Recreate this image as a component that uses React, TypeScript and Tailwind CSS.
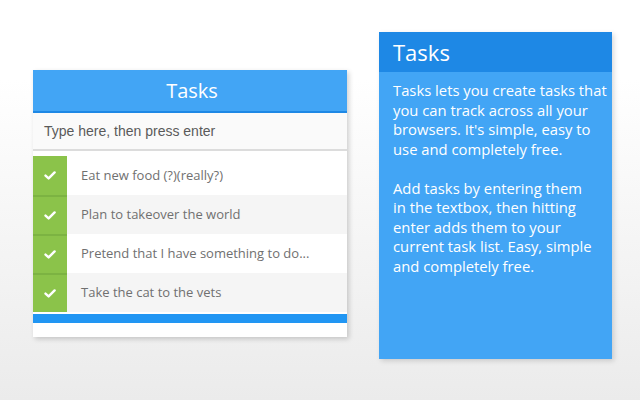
import React from 'react';

const tasks = [
  'Eat new food (?)(really?)',
  'Plan to takeover the world',
  'Pretend that I have something to do...',
  'Take the cat to the vets',
];

const intro = ['Tasks lets you create tasks that', 'you can track across all your', "browsers. It's simple, easy to", 'use and completely free.'];
const howTo = ['Add tasks by entering them', 'in the textbox, then hitting', 'enter adds them to your', 'current task list. Easy, simple', 'and completely free.'];

const Check = () => (
  <svg width="12" height="9" viewBox="0 0 12 9" className="block">
    <path d="M1.5 4.6 L4.6 7.4 L10.6 1.4" fill="none" stroke="white" strokeWidth="2.4" strokeLinecap="round" strokeLinejoin="round" />
  </svg>
);

const TaskCard = () => (
  <div className="mt-[70px] w-[314px] bg-white shadow-[2px_2px_5px_rgba(0,0,0,0.18)]">
    <div className="h-[43px] bg-[#42a5f5] border-b-2 border-[#1e88e5] flex items-center justify-center">
      <span className="text-[20px] text-white font-['Open_Sans',sans-serif] leading-none pl-[4px]">Tasks</span>
    </div>
    <div className="h-[38px] bg-[#fafafa] border-b-2 border-[#dcdcdc] flex items-center pl-[11px]">
      <span className="text-[14px] text-[#5a5a5a] font-['Liberation_Sans',Arial,sans-serif]">Type here, then press enter</span>
    </div>
    <div className="pt-[5px]">
      {tasks.map((t, i) => (
        <div key={i} className={`flex h-[39px] ${i % 2 === 1 ? 'bg-[#f5f5f5]' : 'bg-white'}`}>
          <div className={`w-[34px] bg-[#8bc34a] flex items-center justify-center ${i > 0 ? 'border-t-2 border-[#7cb342]' : ''}`}>
            <Check />
          </div>
          <div className="flex items-center pl-[14px] text-[13px] text-[#707070] font-['Open_Sans',sans-serif]">{t}</div>
        </div>
      ))}
    </div>
    <div className="mt-[2px] h-[9px] bg-[#2196f3]" />
    <div className="h-[14px]" />
  </div>
);

const InfoPanel = () => (
  <div className="mt-[32px] w-[233px] h-[327px] bg-[#42a5f5] shadow-[2px_2px_5px_rgba(0,0,0,0.15)] font-['Open_Sans',sans-serif] text-white">
    <div className="h-[40px] bg-[#1e88e5] flex items-center px-[14px]">
      <span className="text-[22px] leading-none">Tasks</span>
    </div>
    <div className="px-[14px] pt-[9px] text-[14.8px] leading-[19.5px] whitespace-nowrap">
      <p>
        {intro.map((l, i) => (
          <span key={i} className="block">{l}</span>
        ))}
      </p>
      <p className="mt-[19.5px]">
        {howTo.map((l, i) => (
          <span key={i} className="block">{l}</span>
        ))}
      </p>
    </div>
  </div>
);

export default function App() {
  return (
    <div className="w-[640px] h-[400px] bg-gradient-to-b from-white from-20% to-[#ebebeb] flex items-start pl-[33px] gap-[32px] overflow-hidden">
      <TaskCard />
      <InfoPanel />
    </div>
  );
}
